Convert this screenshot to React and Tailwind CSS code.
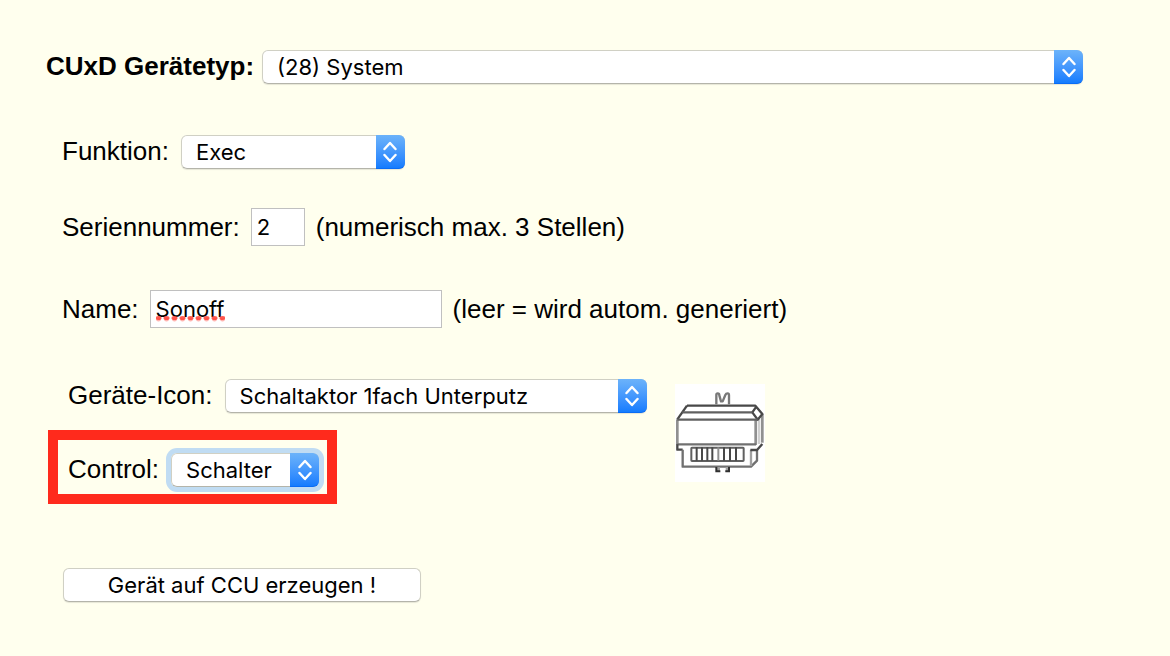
import React from "react";

function PopupSelect({ id, value, className = "", focused = false }) {
  return (
    <div
      className={
        "relative h-[34px] rounded-md bg-white " +
        (focused ? "ring-[5px] ring-[#c0dcf3] " : "shadow-[0_1px_1px_rgba(0,0,0,0.1)] ") +
        className
      }
    >
      <select
        id={id}
        defaultValue={value}
        className="block h-full w-full appearance-none rounded-md border border-[#d0d0c4] border-b-[#b4b4aa] bg-white pl-3.5 pr-8 font-['Inter',sans-serif] text-[22px] leading-8 text-black outline-none"
      >
        <option>{value}</option>
      </select>
      <span className="pointer-events-none absolute inset-y-0 right-0 flex w-[29px] items-center justify-center rounded-r-md border-b border-[#0a6cf5] bg-linear-to-b from-[#6cb3fa] to-[#147cfe]">
        <svg width="14" height="22" viewBox="0 0 14 22" fill="none" stroke="#fff" strokeWidth="2.4" strokeLinecap="round" strokeLinejoin="round">
          <path d="M1.5 8 L7 2 L12.5 8 M1.5 14 L7 20 L12.5 14" />
        </svg>
      </span>
    </div>
  );
}

function SpellingMarks() {
  return (
    <svg className="pointer-events-none absolute left-1.5 top-[26px]" width="69" height="6" viewBox="0 0 69 6" fill="#ff4238" aria-hidden="true">
      {[0, 1, 2, 3, 4, 5, 6, 7, 8].map((i) => (
        <g key={i}>
          <ellipse cx={i * 8 + 2.5} cy="2" rx="3" ry="2" opacity="0.85" />
          <ellipse cx={i * 8 + 2.5} cy="3.5" rx="2.4" ry="2" opacity="0.4" />
        </g>
      ))}
    </svg>
  );
}

function DeviceIcon() {
  return (
    <svg width="90" height="98" viewBox="0 0 270 294" role="img" aria-label="Schaltaktor" className="block bg-white" fill="none">
      <g stroke="#909090" strokeWidth="8">
        <path d="M7 106 V183" />
        <path d="M242 108 V183" />
        <path d="M252 104 V180" stroke="#d0d0d0" />
        <path d="M262 90 V176" />
      </g>
      <g stroke="#484848" strokeWidth="7" strokeLinejoin="round">
        <path d="M124 61 V32 Q124 28 128 28 Q133 28 133 34 L138 52 L143 52 L151 33 Q153 28 158 28 Q162 28 162 34 V61" stroke="#787878" />
        <path d="M36 65 H241 L262 90 L248 107 L232 85 L244 68" />
        <path d="M36 65 L7 106" />
        <path d="M22 85 H232" stroke="#606060" />
        <path d="M7 107 H248" stroke="#606060" />
        <path d="M7 181 H243" stroke="#707070" />
        <path d="M7 181 V197 H23" />
        <path d="M23 197 V248 H228 L246 230 V198" stroke="#707070" />
        <path d="M228 198 V246" stroke="#a0a0a0" />
        <path d="M226 198 H246 L262 180" />
      </g>
      <rect x="49" y="191" width="157" height="40" rx="2" stroke="#606060" strokeWidth="6" />
      <g stroke="#484848" strokeWidth="6">
        <path d="M65 190 V230 M81 190 V230 M97 190 V230 M112 190 V230 M147 190 V230 M165 190 V230 M183 190 V230" />
        <path d="M130 190 V230" stroke="#909090" />
      </g>
      <path d="M124 249 H135 V264 H124 Z M152 249 H162 V264 H152 Z" fill="#a0a0a0" />
      <path d="M124 249 V262 H136 M162 249 V262 H151" stroke="#303030" strokeWidth="6" />
    </svg>
  );
}

const textInput =
  "block h-[38px] w-full border border-[#c0c0c0] bg-white px-[5px] font-['Inter',sans-serif] text-[22px] text-black outline-none";

export default function App() {
  return (
    <main className="min-h-screen bg-[#ffffee] font-['Liberation_Sans',Arial,sans-serif] text-[26px] leading-8 text-black">
      <form className="pb-[54px] pl-[46px] pr-[87px] pt-[50px]" onSubmit={(e) => e.preventDefault()}>
        <div className="flex items-center gap-2">
          <label htmlFor="type" className="pb-0.5 font-bold whitespace-nowrap">CUxD Gerätetyp:</label>
          <PopupSelect id="type" value="(28) System" className="flex-1" />
        </div>

        <div className="mt-[51px] flex items-center gap-3 pl-4">
          <label htmlFor="function" className="pb-0.5">Funktion:</label>
          <PopupSelect id="function" value="Exec" className="w-56" />
        </div>

        <div className="mt-[39px] flex items-center gap-[11px] pl-4">
          <label htmlFor="serial">Seriennummer:</label>
          <div className="w-[54px]">
            <input id="serial" type="text" defaultValue="2" className={textInput} />
          </div>
          <span>(numerisch max. 3 Stellen)</span>
        </div>

        <div className="mt-11 flex items-center gap-[11px] pl-4">
          <label htmlFor="name">Name:</label>
          <div className="relative w-[292px]">
            <input id="name" type="text" defaultValue="Sonoff" spellCheck={false} className={textInput} />
            <SpellingMarks />
          </div>
          <span>(leer = wird autom. generiert)</span>
        </div>

        <div className="mt-[51px] flex items-start gap-7 pl-0.5">
          <div>
            <div className="flex items-center gap-3 pl-5">
              <label htmlFor="icon" className="pb-0.5 whitespace-nowrap">Geräte-Icon:</label>
              <PopupSelect id="icon" value="Schaltaktor 1fach Unterputz" className="w-[422px]" />
            </div>
            <div className="mt-[17px] flex h-[74px] w-fit items-center gap-3 border-10 border-[#ff2a1c] pl-2.5 pr-2 pt-1.5">
              <label htmlFor="control" className="pb-0.5">Control:</label>
              <PopupSelect id="control" value="Schalter" className="w-[148px]" focused />
            </div>
          </div>
          <div className="mt-[5px]">
            <DeviceIcon />
          </div>
        </div>

        <button
          type="submit"
          className="ml-[17px] mt-16 block h-[34px] w-[358px] rounded-md border border-[#d0d0c4] border-b-[#b4b4aa] bg-white font-['Inter',sans-serif] text-[22px] leading-8 shadow-[0_1px_1px_rgba(0,0,0,0.1)]"
        >
          Gerät auf CCU erzeugen !
        </button>
      </form>
    </main>
  );
}
